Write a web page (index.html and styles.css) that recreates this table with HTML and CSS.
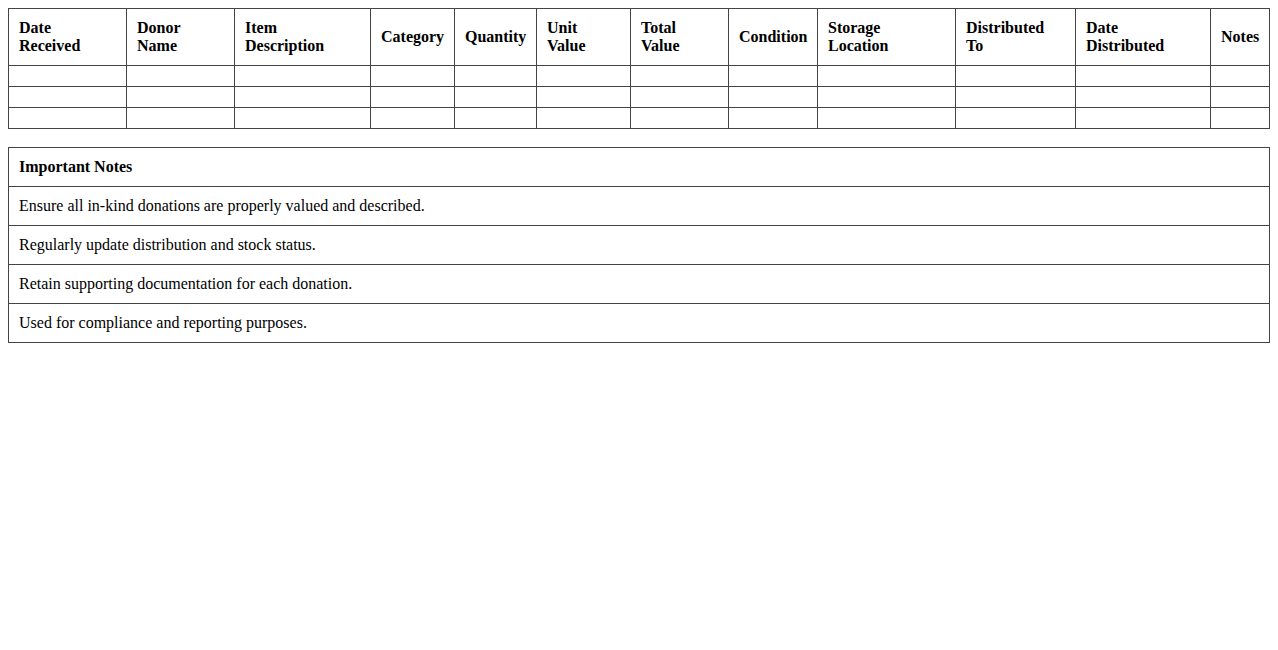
FILE: index.html
```html
<!DOCTYPE html>
<html>
<head>
<meta charset="utf-8">
<link rel="stylesheet" href="styles.css">
</head>
<body>
<table class="log">
  <colgroup>
    <col class="c1"><col class="c2"><col class="c3"><col class="c4"><col class="c5"><col class="c6">
    <col class="c7"><col class="c8"><col class="c9"><col class="c10"><col class="c11"><col class="c12">
  </colgroup>
  <thead>
    <tr>
      <th>Date<br>Received</th>
      <th>Donor<br>Name</th>
      <th>Item<br>Description</th>
      <th>Category</th>
      <th>Quantity</th>
      <th>Unit<br>Value</th>
      <th>Total<br>Value</th>
      <th>Condition</th>
      <th>Storage<br>Location</th>
      <th>Distributed<br>To</th>
      <th>Date<br>Distributed</th>
      <th>Notes</th>
    </tr>
  </thead>
  <tbody>
    <tr><td></td><td></td><td></td><td></td><td></td><td></td><td></td><td></td><td></td><td></td><td></td><td></td></tr>
    <tr><td></td><td></td><td></td><td></td><td></td><td></td><td></td><td></td><td></td><td></td><td></td><td></td></tr>
    <tr><td></td><td></td><td></td><td></td><td></td><td></td><td></td><td></td><td></td><td></td><td></td><td></td></tr>
  </tbody>
</table>
<table class="notes">
  <thead>
    <tr><th>Important Notes</th></tr>
  </thead>
  <tbody>
    <tr><td>Ensure all in-kind donations are properly valued and described.</td></tr>
    <tr><td>Regularly update distribution and stock status.</td></tr>
    <tr><td>Retain supporting documentation for each donation.</td></tr>
    <tr><td>Used for compliance and reporting purposes.</td></tr>
  </tbody>
</table>
</body>
</html>
```
FILE: styles.css
```css
body {
  margin: 8px;
  font-family: "Liberation Serif", "Times New Roman", serif;
  font-size: 16px;
  color: #000;
  background: #fff;
}
table {
  width: 100%;
  border-collapse: collapse;
}
th, td {
  border: 1px solid #444;
  padding: 10px;
  text-align: left;
  vertical-align: middle;
  line-height: 18px;
}
th {
  font-weight: bold;
}
.log {
  table-layout: fixed;
  margin-bottom: 18px;
}
.c1 { width: 118px; }
.c2 { width: 108px; }
.c3 { width: 136px; }
.c4 { width: 84px; }
.c5 { width: 82px; }
.c6 { width: 94px; }
.c7 { width: 98px; }
.c8 { width: 89px; }
.c9 { width: 138px; }
.c10 { width: 120px; }
.c11 { width: 135px; }
.c12 { width: 59px; }
```
